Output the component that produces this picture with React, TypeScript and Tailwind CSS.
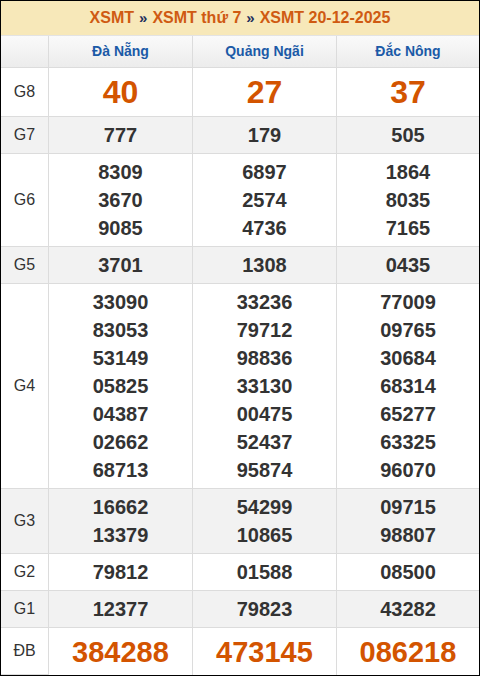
import React from "react";

const provinces = ["Đà Nẵng", "Quảng Ngãi", "Đắc Nông"];

type Row = { label: string; vals: string[][]; kind?: "big" | "db"; gray?: boolean };

const rows: Row[] = [
  { label: "G8", vals: [["40"], ["27"], ["37"]], kind: "big" },
  { label: "G7", vals: [["777"], ["179"], ["505"]], gray: true },
  { label: "G6", vals: [["8309", "3670", "9085"], ["6897", "2574", "4736"], ["1864", "8035", "7165"]] },
  { label: "G5", vals: [["3701"], ["1308"], ["0435"]], gray: true },
  {
    label: "G4",
    vals: [
      ["33090", "83053", "53149", "05825", "04387", "02662", "68713"],
      ["33236", "79712", "98836", "33130", "00475", "52437", "95874"],
      ["77009", "09765", "30684", "68314", "65277", "63325", "96070"],
    ],
  },
  { label: "G3", vals: [["16662", "13379"], ["54299", "10865"], ["09715", "98807"]], gray: true },
  { label: "G2", vals: [["79812"], ["01588"], ["08500"]] },
  { label: "G1", vals: [["12377"], ["79823"], ["43282"]], gray: true },
  { label: "ĐB", vals: [["384288"], ["473145"], ["086218"]], kind: "db" },
];

export default function App() {
  return (
    <div
      className="w-[480px] h-[676px] border border-black bg-white text-[#333]"
      style={{ fontFamily: '"Liberation Sans", Arial, sans-serif' }}
    >
      <div className="h-[35px] bg-[#f7e8b9] flex items-center justify-center border-b border-[#e3e3e3] text-[16px] font-bold text-[#cf5a12]">
        <span>XSMT</span>
        <span className="mx-[5px] text-[#1f2f5c] text-[15px]">»</span>
        <span>XSMT thứ 7</span>
        <span className="mx-[5px] text-[#1f2f5c] text-[15px]">»</span>
        <span>XSMT 20-12-2025</span>
      </div>
      <div className="grid grid-cols-[47px_144px_144px_143px]">
        <div className="h-[32px] bg-gradient-to-b from-[#fafafa] to-[#ececec] border-b border-[#dcdcdc]" />
        {provinces.map((p) => (
          <div
            key={p}
            className="h-[32px] flex items-center justify-center bg-gradient-to-b from-[#fafafa] to-[#ececec] border-b border-l border-[#dcdcdc] text-[14px] font-bold text-[#1b5aa7]"
          >
            {p}
          </div>
        ))}
        {rows.map((r) => {
          const bg = r.gray ? "bg-[#f2f2f2]" : "bg-white";
          const hCls =
            r.kind === "big" ? "h-[49px]" : r.kind === "db" ? "h-[47px]" : "";
          return (
            <React.Fragment key={r.label}>
              <div
                className={`${bg} ${hCls} flex items-center justify-center border-b border-[#dcdcdc] text-[16px] text-[#333]`}
              >
                {r.label}
              </div>
              {r.vals.map((v, i) => (
                <div
                  key={i}
                  className={`${bg} ${hCls} flex flex-col items-center justify-center border-b border-l border-[#dcdcdc] ${
                    r.kind ? "" : "py-[4px]"
                  } ${r.label === "ĐB" ? "border-b-0" : ""}`}
                >
                  {v.map((n) => (
                    <div
                      key={n}
                      className={
                        r.kind === "big"
                          ? "text-[32px] leading-[36px] font-bold text-[#d35400]"
                          : r.kind === "db"
                          ? "text-[29px] leading-[34px] font-bold text-[#d35400]"
                          : "text-[20px] leading-[28px] font-bold text-[#333]"
                      }
                    >
                      {n}
                    </div>
                  ))}
                </div>
              ))}
            </React.Fragment>
          );
        })}
      </div>
    </div>
  );
}
